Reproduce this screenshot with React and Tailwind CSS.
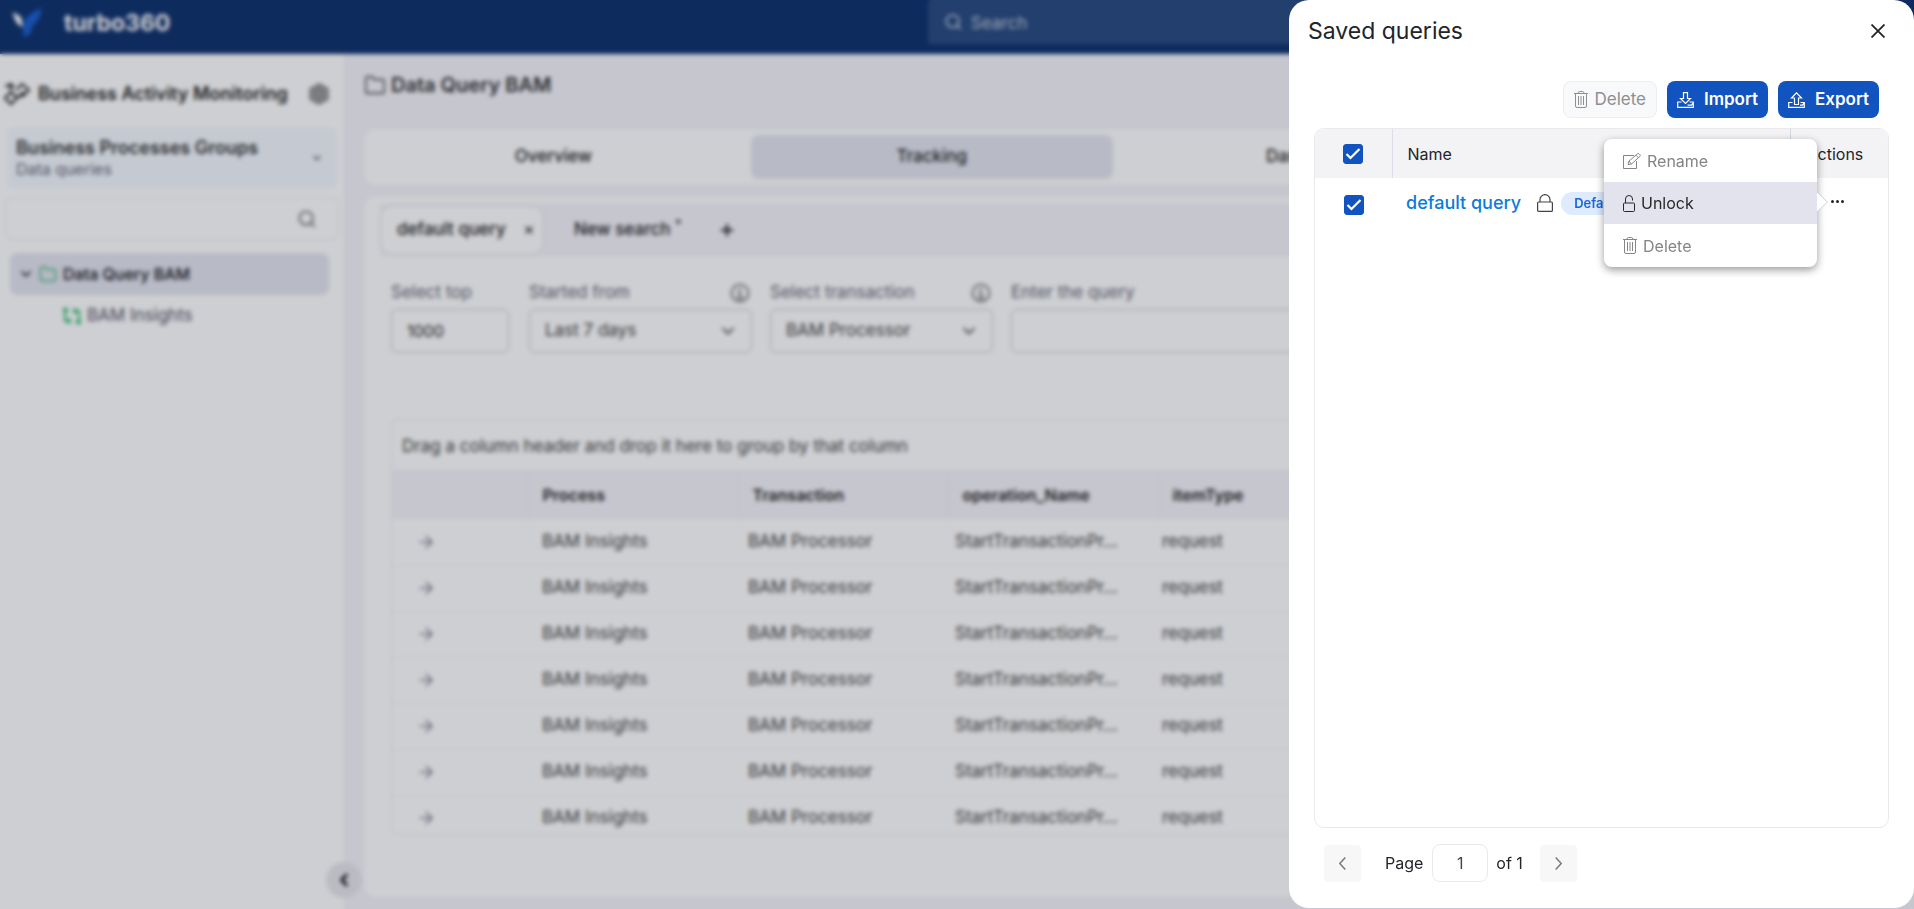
import { useState } from "react";
import { FiChevronDown, FiChevronLeft, FiFolder, FiPlus, FiSearch, FiX } from "react-icons/fi";
import { LuArrowRight } from "react-icons/lu";

const rows = Array.from({ length: 7 }, (_, i) => ({
  id: i,
  process: "BAM Insights",
  transaction: "BAM Processor",
  operation: "StartTransactionPr…",
  type: "request",
}));

const TrashIcon = ({ className }) => (
  <svg className={className} viewBox="0 0 14 17" fill="none" stroke="currentColor">
    <path d="M0 2.500h14M4 2.500q0-2 1.500-2h3q1.500 0 1.500 2M1.500 2.500v12.500q0 1.500 1.500 1.500h8q1.500 0 1.500-1.500V2.500M4.500 5v9M7 5v9M9.500 5v9" />
  </svg>
);

const ImportIcon = () => (
  <svg className="h-4 w-[17px]" viewBox="0 0 17 16" fill="none" stroke="currentColor" strokeWidth="1.200">
    <path d="M6.500.700h4v5.800h3l-5 5-5-5h3zM4.500 10H.700v5.300h15.600V10h-3.800M10.500 13.200h4l1.500-2" />
  </svg>
);

const ExportIcon = () => (
  <svg className="h-4 w-[17px]" viewBox="0 0 17 16" fill="none" stroke="currentColor" strokeWidth="1.200">
    <path d="M6.500 12.500V6h-3l5-5.200 5 5.200h-3v6.500zM4.500 10.500H.700v4.800h15.600v-4.800h-3.800M12 13.200h2.500l1.500-2" />
  </svg>
);

const LockIcon = ({ className }) => (
  <svg className={className} viewBox="0 0 16 18" fill="none" stroke="currentColor" strokeWidth="1.200">
    <rect x=".6" y="8" width="14.800" height="9.400" rx="1" />
    <path d="M3 8V5.600a5 5 0 0 1 10 0V8" />
  </svg>
);

const UnlockIcon = ({ className }) => (
  <svg className={className} viewBox="0 0 12 17" fill="none" stroke="currentColor">
    <rect x=".5" y="8" width="11" height="8.500" rx="1" />
    <path d="M2.500 8V4a3.500 3.500 0 0 1 7 0v1.500" />
  </svg>
);

const EditIcon = ({ className }) => (
  <svg className={className} viewBox="0 0 18 16" fill="none" stroke="currentColor">
    <path d="M11 2.500H.500v13h13V8M5 11.500l1-3.500L14.500.8q.8-.6 1.500 0l1 1q.7.800 0 1.500L8.500 11zM13 2.200l2.700 2.700M6 8l2.500 3" />
  </svg>
);

const BamIcon = () => (
  <svg className="h-6 w-7" viewBox="0 0 28 24" fill="none" stroke="currentColor" strokeWidth="2">
    <path d="M2 16l6-6 6 6-6 6zM13 8l6-6 7 6-6 6h-5M2 4h7M6 1l4 3-3 4M14 16l7-6" />
  </svg>
);

const NutIcon = () => (
  <svg className="size-[22px]" viewBox="0 0 22 22" fill="#aaa" stroke="currentColor" strokeWidth="1.500">
    <path d="M11 1l8.700 5v10L11 21l-8.700-5V6z" />
    <circle cx="11" cy="11" r="4" />
  </svg>
);

const InfoIcon = () => (
  <svg className="size-5" viewBox="0 0 20 20" fill="none" stroke="currentColor" strokeWidth="1.500">
    <circle cx="10" cy="10" r="8.500" />
    <path d="M7.500 8.500H10V15M7 15h6M9.200 5.500h1.600" />
  </svg>
);

const InsightsIcon = () => (
  <svg className="size-[18px]" viewBox="0 0 18 18" fill="none" stroke="currentColor" strokeWidth="2">
    <path d="M2 3v11h5M5 11.500l2.500 2.500L5 16.500M16 15V4h-5M13 1.500L10.500 4 13 6.500" />
    <circle cx="2.500" cy="3" r="1.500" />
    <circle cx="15.500" cy="15" r="1.500" />
  </svg>
);

const Logo = () => (
  <svg className="h-8 w-8" viewBox="0 0 32 32">
    <path d="M2 5l8 5 2 10-4-2q-5-4-6-13z" fill="#fff" />
    <path d="M30 1q0 12-8 17l-3 9-6 3q-2-6 0-16 4-7 17-13z" fill="#1a5fd0" />
  </svg>
);

const Topbar = () => (
  <header className="flex h-[54px] shrink-0 items-start bg-[#0f336f] pl-[11px] text-white">
    <div className="flex w-[917px] items-center gap-[21px] pt-[7px]">
      <Logo />
      <span className="text-[23px] font-bold leading-8">turbo360</span>
    </div>
    <label className="flex h-11 w-[480px] items-center gap-2 rounded bg-[#284b82] px-4">
      <FiSearch className="size-5 opacity-80" />
      <input
        className="w-full bg-transparent pt-1 text-[17px] outline-none placeholder:text-[#c3cbd9]"
        placeholder="Search"
        aria-label="Search"
      />
    </label>
  </header>
);

const Sidebar = () => (
  <aside className="relative flex w-[344px] shrink-0 flex-col bg-white">
    <div className="flex h-20 items-center pl-[3px] text-[#222]">
      <BamIcon />
      <h1 className="flex-1 pl-[7px] text-lg font-semibold">Business Activity Monitoring</h1>
      <button aria-label="Settings" className="mr-[14px] text-[#666]">
        <NutIcon />
      </button>
    </div>
    <button className="mx-[7px] -mt-[7px] flex h-[62px] items-center justify-between rounded-lg bg-[#f4f9ff] pl-[9px] pr-[14px] text-left">
      <span>
        <span className="block text-lg font-semibold leading-[22px] text-[#333]">Business Processes Groups</span>
        <span className="block text-base leading-5 text-[#667]">Data queries</span>
      </span>
      <FiChevronDown className="size-3 text-[#555]" strokeWidth={3} />
    </button>
    <label className="mx-[5px] mt-2 flex h-[43px] items-center rounded-lg border border-[#eeeef2] pr-[21px]">
      <input className="w-full flex-1 bg-transparent pl-3 outline-none" aria-label="Search processes" />
      <FiSearch className="size-5 text-[#666]" />
    </label>
    <ul className="ml-[10px] mr-[15px] mt-[13px] text-base">
      <li className="flex h-[42px] items-center rounded-lg bg-[#e4e5f1] pl-2 font-medium text-[#111]">
        <FiChevronDown className="size-4 text-[#444]" strokeWidth={3} />
        <FiFolder className="ml-[5px] size-[18px] text-[#3db87a]" />
        <span className="pl-[6px]">Data Query BAM</span>
      </li>
      <li className="flex h-[42px] items-center pl-[53px] text-[17px] text-[#556]">
        <span className="text-[#2fbd75]"><InsightsIcon /></span>
        <span className="pl-[6px]">BAM Insights</span>
      </li>
    </ul>
    <button
      aria-label="Collapse sidebar"
      className="absolute -right-[18px] bottom-[11px] z-10 flex size-9 items-center justify-center rounded-full bg-[#e8e8ec]"
    >
      <FiChevronLeft className="size-5" strokeWidth={3} />
    </button>
  </aside>
);

const SelectField = ({ id, label, value }) => (
  <div className="w-[223px]">
    <div className="flex h-8 items-center justify-between pr-[2px] text-[#667]">
      <label htmlFor={id}>{label}</label>
      <span className="text-[#555]"><InfoIcon /></span>
    </div>
    <div className="relative">
      <select
        id={id}
        className="h-11 w-full appearance-none rounded-md border border-[#c8c8cc] bg-white pl-[15px] text-[#444]"
      >
        <option>{value}</option>
      </select>
      <FiChevronDown className="absolute right-[14px] top-3 size-5 text-[#333]" strokeWidth={2} />
    </div>
  </div>
);

const QueryFilters = () => (
  <div className="flex gap-[18px] pl-[11px] pt-[21px] text-[17px]">
    <div className="mr-[2px] w-[118px]">
      <label htmlFor="top" className="flex h-8 items-center text-[#667]">Select top</label>
      <input
        id="top"
        defaultValue="1000"
        className="h-11 w-full rounded-md border border-[#c8c8cc] pl-[15px] text-base text-[#222] outline-none"
      />
    </div>
    <SelectField id="started" label="Started from" value="Last 7 days" />
    <SelectField id="transaction" label="Select transaction" value="BAM Processor" />
    <div className="flex-1">
      <label htmlFor="query" className="flex h-8 items-center text-[#667]">Enter the query</label>
      <input id="query" className="h-11 w-full rounded-md border border-[#c8c8cc] pl-4 outline-none" />
    </div>
  </div>
);

const ResultGrid = () => (
  <div className="ml-[11px] mt-[66px] h-[416px] overflow-hidden rounded-md border border-[#ededf0]">
    <p className="flex h-[50px] items-center pl-[10px] pt-1 text-[17px] text-[#444]">
      Drag a column header and drop it here to group by that column
    </p>
    <table className="w-full table-fixed text-left">
      <thead className="bg-[#f5f4fb] text-base text-[#222]">
        <tr className="h-[49px]">
          <th aria-label="Open" className="w-[136px]" />
          <th className="w-[210px] border-l border-[#ebebf2] pl-[14px] font-semibold">Process</th>
          <th className="w-[210px] border-l border-[#ebebf2] pl-[14px] font-semibold">Transaction</th>
          <th className="w-[210px] border-l border-[#ebebf2] pl-[14px] font-semibold">operation_Name</th>
          <th className="border-l border-[#ebebf2] pl-[14px] font-semibold">itemType</th>
        </tr>
      </thead>
      <tbody className="text-[17px] text-[#444]">
        {rows.map((row) => (
          <tr key={row.id} className="h-[46px] border-b border-[#f4f4f6]">
            <td className="pl-6"><LuArrowRight className="size-5 text-[#667]" strokeWidth={1.5} /></td>
            <td className="pl-[14px]">{row.process}</td>
            <td className="pl-[10px]">{row.transaction}</td>
            <td className="pl-[7px]">{row.operation}</td>
            <td className="pl-1">{row.type}</td>
          </tr>
        ))}
      </tbody>
    </table>
  </div>
);

const Content = () => (
  <main className="flex min-w-0 flex-1 flex-col bg-[#f5f4fb] pb-3 pl-5 pr-9">
    <h2 className="flex h-[75px] items-center gap-[5px] pb-[14px] text-xl font-semibold text-[#333]">
      <FiFolder className="size-[22px]" strokeWidth={1.5} />
      Data Query BAM
    </h2>
    <div className="grid h-14 shrink-0 grid-cols-4 gap-4 rounded-xl bg-white px-2 py-[6px] text-[17px] font-medium text-[#222]">
      <button>Overview</button>
      <button className="rounded-lg bg-[#e4e6f1]">Tracking</button>
      <button>Dashboard</button>
    </div>
    <div className="mt-[11px] flex-1 rounded-xl bg-white pl-4 pt-2">
      <div className="flex h-[52px] items-center bg-[#f5f4fb] text-[17px] font-medium text-[#222]">
        <button className="flex h-[50px] w-[164px] items-center justify-between rounded-xl border border-[#dddde2] bg-white pl-4 pr-2">
          default query
          <FiX className="size-3" strokeWidth={3} />
        </button>
        <button className="pl-[30px]">New search <sup>*</sup></button>
        <button aria-label="Add search" className="pl-9">
          <FiPlus className="size-[18px]" strokeWidth={3} />
        </button>
      </div>
      <QueryFilters />
      <ResultGrid />
    </div>
  </main>
);

const Checkbox = ({ label, checked, onChange }) => (
  <span className="relative mx-auto block size-5">
    <input
      type="checkbox"
      aria-label={label}
      checked={checked}
      onChange={onChange}
      className="block size-5 appearance-none rounded-[3px] border border-[#1153bf] checked:bg-[#1153bf]"
    />
    {checked && (
      <svg className="pointer-events-none absolute inset-0 size-5" viewBox="0 0 20 20" fill="none" stroke="#fff" strokeWidth="2.200">
        <path d="M3.500 10l4 4L16.500 5" />
      </svg>
    )}
  </span>
);

const RowMenu = () => (
  <div className="absolute right-[71px] top-[-39px] z-10 w-[213px] rounded-lg bg-white text-base shadow-[0_3px_8px_rgba(0,0,0,0.4)]">
    <button className="flex h-[43px] w-full items-center gap-[6px] pl-[19px] text-[#858585]">
      <EditIcon className="h-4 w-[18px]" />
      Rename
    </button>
    <button className="flex h-[42px] w-full items-center gap-[6px] bg-[#e3e3ed] pl-[19px] text-[#26292c]">
      <UnlockIcon className="h-[17px] w-3" />
      Unlock
    </button>
    <button className="flex h-[43px] w-full items-center gap-[6px] pl-[19px] text-[#858585]">
      <TrashIcon className="h-[17px] w-[14px]" />
      Delete
    </button>
    <svg className="absolute left-full top-[52px] h-[22px] w-3" viewBox="0 0 12 22">
      <path d="M0 1l10.500 10L0 21" fill="#fff" stroke="#d0d0d0" />
    </svg>
  </div>
);

const SavedQueries = () => {
  const [selected, setSelected] = useState(true);
  const toggle = () => setSelected(!selected);

  return (
    <section className="fixed bottom-px right-0 top-0 flex w-[625px] flex-col rounded-[20px] bg-white px-[25px] text-[#212529]">
      <div className="-ml-[6px] flex h-[62px] items-center justify-between pr-1">
        <h2 className="text-[23px]">Saved queries</h2>
        <button aria-label="Close">
          <svg className="size-[14px]" viewBox="0 0 14 14" stroke="currentColor" strokeWidth="1.800">
            <path d="M.500.500l13 13M13.500.500l-13 13" />
          </svg>
        </button>
      </div>
      <div className="mb-[10px] mt-[19px] flex justify-end gap-[10px] pr-[10px]">
        <button className="flex h-[37px] items-center gap-[6px] rounded-lg border border-[#eceef1] bg-[#f8f9fb] px-[10px] text-[17px] text-[#8d8f91]">
          <TrashIcon className="h-[17px] w-[14px]" />
          Delete
        </button>
        <button className="flex h-[37px] items-center gap-[10px] rounded-lg bg-[#1153bf] px-[10px] text-[17px] font-semibold text-white">
          <ImportIcon />
          Import
        </button>
        <button className="flex h-[37px] items-center gap-[10px] rounded-lg bg-[#1153bf] px-[10px] text-[17px] font-semibold text-white">
          <ExportIcon />
          Export
        </button>
      </div>
      <div className="flex-1 rounded-[10px] border border-[#e9e9eb]">
        <table className="w-full table-fixed text-left">
          <thead className="bg-[#f3f3f6]">
            <tr className="h-[49px]">
              <th className="w-[77px] rounded-tl-[10px]">
                <Checkbox label="Select all queries" checked={selected} onChange={toggle} />
              </th>
              <th className="border-l border-[#dcdfe8] pl-[15px] font-normal">Name</th>
              <th className="w-[98px] rounded-tr-[10px] border-l border-[#d0d6e2] pl-4 font-normal">Actions</th>
            </tr>
          </thead>
          <tbody>
            <tr className="h-[50px]">
              <td className="pt-1">
                <Checkbox label="Select default query" checked={selected} onChange={toggle} />
              </td>
              <td className="pl-[14px]">
                <div className="flex items-center">
                  <a href="#query" className="text-lg font-medium text-[#0b7bdc]">default query</a>
                  <LockIcon className="ml-4 h-[18px] w-4 shrink-0 text-[#444]" />
                  <span className="ml-2 rounded-full bg-[#deebfd] px-[13px] py-[3px] text-[13px] font-semibold leading-[17px] text-[#1a66d8]">
                    Default
                  </span>
                </div>
              </td>
              <td className="relative pl-[41px]">
                <button aria-label="Query actions" className="block pb-[3px]">
                  <svg className="h-[3px] w-[13px]" viewBox="0 0 13 3" fill="currentColor">
                    <circle cx="1.500" cy="1.500" r="1.500" />
                    <circle cx="6.500" cy="1.500" r="1.500" />
                    <circle cx="11.500" cy="1.500" r="1.500" />
                  </svg>
                </button>
                <RowMenu />
              </td>
            </tr>
          </tbody>
        </table>
      </div>
      <nav className="flex items-center px-[10px] pb-[26px] pt-4">
        <button aria-label="Previous page" className="flex h-[37px] w-[37px] items-center justify-center rounded bg-[#f7f7f7] text-[#7a7a7a]">
          <svg className="h-[13px] w-[7px]" viewBox="0 0 7 13" fill="none" stroke="currentColor" strokeWidth="1.500">
            <path d="M6.300.500l-5.500 6 5.500 6" />
          </svg>
        </button>
        <label htmlFor="page" className="pl-6 pr-[9px]">Page</label>
        <input
          id="page"
          defaultValue="1"
          className="h-[38px] w-14 rounded-lg border border-[#e9e9e9] text-center text-[#444] outline-none"
        />
        <span className="pl-2 pr-[17px]">of 1</span>
        <button aria-label="Next page" className="flex h-[37px] w-[37px] items-center justify-center rounded bg-[#f7f7f7] text-[#7a7a7a]">
          <svg className="h-[13px] w-[7px]" viewBox="0 0 7 13" fill="none" stroke="currentColor" strokeWidth="1.500">
            <path d="M.700.500l5.500 6-5.500 6" />
          </svg>
        </button>
      </nav>
    </section>
  );
};

export default function App() {
  return (
    <div className="flex h-screen flex-col overflow-hidden font-['Inter',sans-serif]">
      <Topbar />
      <div className="flex min-h-0 flex-1">
        <Sidebar />
        <Content />
      </div>
      <div className="fixed inset-0 z-20 bg-[#0a0f1e]/20 backdrop-blur-[2px]" />
      <div className="relative z-30">
        <SavedQueries />
      </div>
    </div>
  );
}
